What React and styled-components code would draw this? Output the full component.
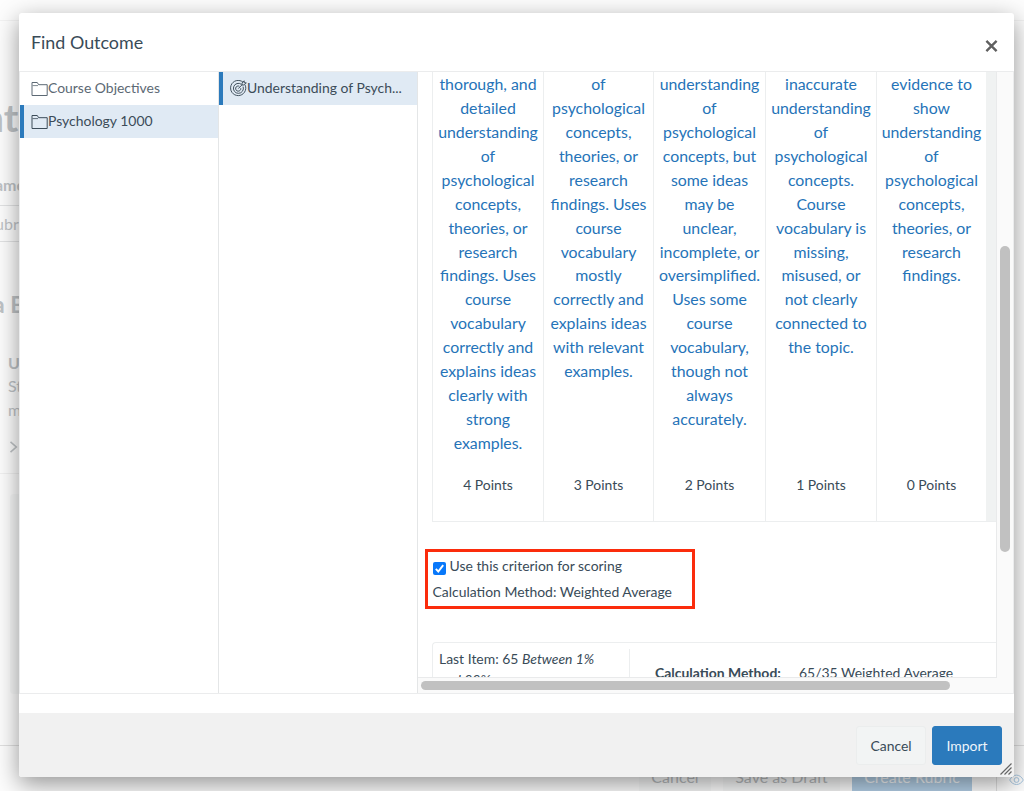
import React from "react";
import styled, { createGlobalStyle } from "styled-components";

const GlobalStyle = createGlobalStyle`
  * {
    box-sizing: border-box;
  }
  body {
    margin: 0;
    overflow: hidden;
    background: #fdfdfd;
    color: #394b58;
    font-family: Lato, "Open Sans", sans-serif;
    font-size: 13.95px;
  }
  button {
    font-family: inherit;
  }
`;

const Screen = styled.div`
  position: relative;
  width: 1024px;
  height: 791px;
  overflow: hidden;
`;

const Page = styled.div`
  height: 791px;
  display: flex;
  flex-direction: column;
  color: #bfc3c6;
  white-space: nowrap;
  overflow: hidden;
`;

const PageBody = styled.div`
  height: 746px;
  flex: none;
  padding-top: 20px;
  border-bottom: 1px solid #e0e0e0;
  overflow: hidden;
`;

const PageTop = styled.div`
  border-top: 1px solid #f3f3f3;
  height: 75px;
`;

const PageTitle = styled.div`
  margin-left: -18px;
  height: 46px;
  line-height: 45px;
  font-size: 39px;
  font-weight: 700;
`;

const PageLabel = styled.div`
  margin: 34px 0 10px -5px;
  line-height: 19px;
  height: 20px;
  font-size: 16px;
  font-weight: 700;
`;

const PageInput = styled.div`
  width: 700px;
  height: 37px;
  margin-left: -5px;
  line-height: 36px;
  font-size: 16px;
  border: solid #e2e3e4;
  border-width: 1px 0;
`;

const PageHeading = styled.div`
  margin: 47px 0 32px -7px;
  line-height: 30px;
  font-size: 23px;
  font-weight: 700;
`;

const PageCriterion = styled.div`
  width: 900px;
  height: 123px;
  padding-left: 8px;
  font-size: 16px;
  line-height: 23.3px;
  border-bottom: 1px solid #f1f1f1;

  svg {
    display: block;
    margin-top: 20px;
  }
`;

const PagePanel = styled.div`
  width: 900px;
  margin: 20px 0 0 10px;
  height: 200px;
  border-radius: 4px;
  background: #f7f8f8;
`;

const PageFooter = styled.div`
  flex: 1;
  display: flex;
  justify-content: flex-end;
  align-items: flex-start;
  gap: 12px;
  padding-top: 13px;
`;

const PageButton = styled.div`
  width: ${props => props.w}px;
  height: 38px;
  line-height: 36px;
  text-align: center;
  font-size: 16px;
  color: ${props => (props.primary ? "#f3f6f9" : "#b7bbbd")};
  background: ${props => (props.primary ? "#b3cfe6" : "#f7f8f8")};
`;

const Preview = styled.div`
  width: 28px;
  height: 46px;
  margin: -13px 0 0 12px;
  padding: 26px 0 0 12px;
  border-left: 1px solid #e0e0e0;
  color: #a9c8e2;
`;

const Dialog = styled.div`
  position: absolute;
  left: 19px;
  top: 13px;
  width: 995px;
  height: 764px;
  display: flex;
  flex-direction: column;
  border-radius: 3px;
  background: #fff;
  box-shadow: 0 7px 24px rgba(0, 0, 0, 0.42);
  overflow: hidden;
`;

const Header = styled.div`
  height: 59px;
  flex: none;
  display: flex;
  justify-content: space-between;
  padding: 0 16px 0 12px;
  border-bottom: 1px solid #ebeced;
`;

const Title = styled.div`
  line-height: 58px;
  font-size: 17.9px;
`;

const Close = styled.button`
  height: 14px;
  margin-top: 26px;
  padding: 0;
  border: 0;
  background: none;
  color: #606060;

  svg {
    display: block;
  }
`;

const Columns = styled.div`
  height: 622px;
  flex: none;
  display: flex;
  border: solid #ebeced;
  border-width: 0 1px 1px;
`;

const Directory = styled.div`
  width: ${props => props.w}px;
  flex: none;
  border-right: 1px solid #e4e6e7;
`;

const Item = styled.div`
  height: 33px;
  display: flex;
  align-items: center;
  padding-left: ${props => (props.selected ? 7 : 11)}px;
  border-left: ${props => (props.selected ? "4px solid #2b7abc" : "0")};
  background: ${props => (props.selected ? "#e0eaf4" : "#fff")};
  color: ${props => (props.selected ? "#3c4c59" : "#5c6974")};
  line-height: 31px;
  white-space: nowrap;

  svg {
    flex: none;
  }
`;

const ItemLabel = styled.span`
  height: 33px;
`;

const Detail = styled.div`
  flex: 1;
  min-width: 0;
  display: grid;
  grid-template-columns: 579px 1fr;
  grid-template-rows: 606px 1fr;
`;

const Viewport = styled.div`
  overflow: hidden;
  padding-left: 14px;
  border: solid #e9eaeb;
  border-width: 0 1px 1px 0;
`;

const Ratings = styled.div`
  display: grid;
  grid-template-columns: 111px 110px 112px 111px 110px 1fr;
  height: 450px;
  border-bottom: 1px solid #eceeef;
`;

const Rating = styled.div`
  height: 449px;
  border-left: 1px solid #eceeef;
  text-align: center;
  display: flex;
  flex-direction: column;
  justify-content: space-between;
`;

const Description = styled.div`
  margin-top: 0.4px;
  color: #2573b8;
  font-size: 15.87px;
  line-height: 23.87px;
  white-space: pre;
`;

const Points = styled.div`
  height: 46px;
  line-height: 20px;
`;

const Spacer = styled.div`
  background: #f0f2f2;
`;

const Highlight = styled.div`
  width: 270px;
  height: 60px;
  margin: 27px 0 33px -7px;
  padding: 1px 0 0 4.5px;
  border: 3px solid #fb2c0c;
`;

const Option = styled.div`
  display: flex;
  align-items: center;
  height: 26px;
  line-height: 26px;
  white-space: nowrap;
`;

const Check = styled.span`
  width: 13px;
  height: 13px;
  margin: 4px 4px 0 0;
  border-radius: 2px;
  background: #0878fa;

  svg {
    display: block;
  }
`;

const OptionLabel = styled.span`
  margin-top: -1px;
`;

const Calculation = styled.div`
  display: flex;
  height: 90px;
  border: solid #eceeef;
  border-width: 1px 0 0 1px;
  border-radius: 4px 0 0 0;
  white-space: nowrap;
`;

const LastItem = styled.div`
  width: 197px;
  margin-top: 6px;
  padding-left: 6px;
  border-right: 1px solid #eceeef;
  line-height: 20.5px;
`;

const Method = styled.div`
  display: flex;
  padding: 18px 0 0 25px;
  line-height: 24px;

  b {
    width: 144px;
  }
`;

const ScrollY = styled.div`
  background: #fafafa;
  padding: 174px 0 0 3px;
`;

const ThumbY = styled.div`
  width: 10px;
  height: 306px;
  border-radius: 5px;
  background: #c1c1c1;
`;

const ScrollX = styled.div`
  grid-column: span 2;
  background: #fafafa;
  padding: 3px 0 0 3px;
`;

const ThumbX = styled.div`
  width: 529px;
  height: 9px;
  border-radius: 5px;
  background: #c1c1c1;
`;

const Footer = styled.div`
  height: 64px;
  margin-top: 19px;
  display: flex;
  justify-content: flex-end;
  gap: 6px;
  padding: 13px 12px 0 0;
  background: #f1f1f1;
`;

const Button = styled.button`
  width: 70px;
  height: 39px;
  padding: 0;
  border-radius: 3px;
  border: 1px solid ${props => (props.primary ? "#2b7abc" : "#ebeded")};
  background: ${props => (props.primary ? "#2b7abc" : "#f2f4f4")};
  color: ${props => (props.primary ? "#eef5fb" : "#394b58")};
  font-size: 13.95px;
`;

const Grip = styled.svg`
  position: absolute;
  right: 2px;
  bottom: 2px;
`;

const FolderIcon = () => (
  <svg width="17" height="16" viewBox="0 0 17 16" fill="none" stroke="currentColor">
    <path d="M1 14.5V1.5H6.3L7.6 3.7H16.2V14.5Z" />
    <path d="M1.5 4.6H7" strokeWidth="0.8" />
  </svg>
);

const OutcomeIcon = () => (
  <svg width="17" height="17" viewBox="0 0 17 17" fill="none" stroke="currentColor" strokeWidth="0.95">
    <path d="M13.2 2.3A7.6 7.6 0 1 0 15.2 5.1" />
    <path d="M11.5 4.4A5 5 0 1 0 13.1 6.6" />
    <path d="M9.3 6.2A2.6 2.6 0 1 0 10.8 8.2" />
    <path d="M8.3 8.6L12.2 4.7M12 2.9V5H14.2L16.3 2.8H14.2V.8Z" />
  </svg>
);

const ratings = [
  {
    points: 4,
    text: "thorough, and\ndetailed\nunderstanding\nof\npsychological\nconcepts,\ntheories, or\nresearch\nfindings. Uses\ncourse\nvocabulary\ncorrectly and\nexplains ideas\nclearly with\nstrong\nexamples."
  },
  {
    points: 3,
    text: "of\npsychological\nconcepts,\ntheories, or\nresearch\nfindings. Uses\ncourse\nvocabulary\nmostly\ncorrectly and\nexplains ideas\nwith relevant\nexamples."
  },
  {
    points: 2,
    text: "understanding\nof\npsychological\nconcepts, but\nsome ideas\nmay be\nunclear,\nincomplete, or\noversimplified.\nUses some\ncourse\nvocabulary,\nthough not\nalways\naccurately."
  },
  {
    points: 1,
    text: "inaccurate\nunderstanding\nof\npsychological\nconcepts.\nCourse\nvocabulary is\nmissing,\nmisused, or\nnot clearly\nconnected to\nthe topic."
  },
  {
    points: 0,
    text: "evidence to\nshow\nunderstanding\nof\npsychological\nconcepts,\ntheories, or\nresearch\nfindings."
  }
];

const BackgroundPage = () => (
  <Page>
    <PageBody>
      <PageTop />
      <PageTitle>nte</PageTitle>
      <PageLabel>ame</PageLabel>
      <PageInput>ubric</PageInput>
      <PageHeading>a B</PageHeading>
      <PageCriterion>
        <b>U</b>
        <div>St</div>
        <div>m</div>
        <svg width="10" height="12" viewBox="0 0 10 12" fill="none" stroke="currentColor" strokeWidth="1.6">
          <path d="M2.5 .8L8.3 6L2.5 11.2" />
        </svg>
      </PageCriterion>
      <PagePanel />
    </PageBody>
    <PageFooter>
      <PageButton w={72}>Cancel</PageButton>
      <PageButton w={117}>Save as Draft</PageButton>
      <PageButton w={120} primary>Create Rubric</PageButton>
      <Preview>
        <svg width="15" height="12" viewBox="0 0 15 12" fill="none" stroke="currentColor">
          <path d="M.7 6C4-.5 11-.5 14.3 6C11 12 4 12 .7 6Z" />
          <circle cx="7.5" cy="6" r="2.4" />
        </svg>
      </Preview>
    </PageFooter>
  </Page>
);

export default () => {
  return (
    <Screen>
      <GlobalStyle />
      <BackgroundPage />
      <Dialog>
        <Header>
          <Title>Find Outcome</Title>
          <Close>
            <svg width="13" height="14" viewBox="0 0 13 14" fill="none" stroke="currentColor" strokeWidth="2.4">
              <path d="M1.4 1.9L11.6 12.1M11.6 1.9L1.4 12.1" />
            </svg>
          </Close>
        </Header>
        <Columns>
          <Directory w={199}>
            <Item><FolderIcon /><ItemLabel>Course Objectives</ItemLabel></Item>
            <Item selected><FolderIcon /><ItemLabel>Psychology 1000</ItemLabel></Item>
          </Directory>
          <Directory w={199}>
            <Item selected><OutcomeIcon /><ItemLabel>Understanding of Psych...</ItemLabel></Item>
          </Directory>
          <Detail>
            <Viewport>
              <Ratings>
                {ratings.map(rating => (
                  <Rating key={rating.points}>
                    <Description>{rating.text}</Description>
                    <Points>{rating.points} Points</Points>
                  </Rating>
                ))}
                <Spacer />
              </Ratings>
              <Highlight>
                <Option>
                  <Check>
                    <svg width="13" height="13" viewBox="0 0 13 13" fill="none" stroke="#fff" strokeWidth="1.9">
                      <path d="M2.8 6.9L5.3 9.5L10.2 3.2" />
                    </svg>
                  </Check>
                  <OptionLabel>Use this criterion for scoring</OptionLabel>
                </Option>
                <Option>Calculation Method: Weighted Average</Option>
              </Highlight>
              <Calculation>
                <LastItem>
                  Last Item: 65 <i>Between 1%<br />and 99%</i>
                </LastItem>
                <Method>
                  <b>Calculation Method:</b>
                  <span>65/35 Weighted Average</span>
                </Method>
              </Calculation>
            </Viewport>
            <ScrollY>
              <ThumbY />
            </ScrollY>
            <ScrollX>
              <ThumbX />
            </ScrollX>
          </Detail>
        </Columns>
        <Footer>
          <Button>Cancel</Button>
          <Button primary>Import</Button>
        </Footer>
        <Grip width="12" height="12" viewBox="0 0 12 12" stroke="#666" strokeWidth="1.2">
          <path d="M.5 11.5L11.5 .5M4.5 11.5L11.5 4.5M8.5 11.5L11.5 8.5" />
        </Grip>
      </Dialog>
    </Screen>
  );
};
